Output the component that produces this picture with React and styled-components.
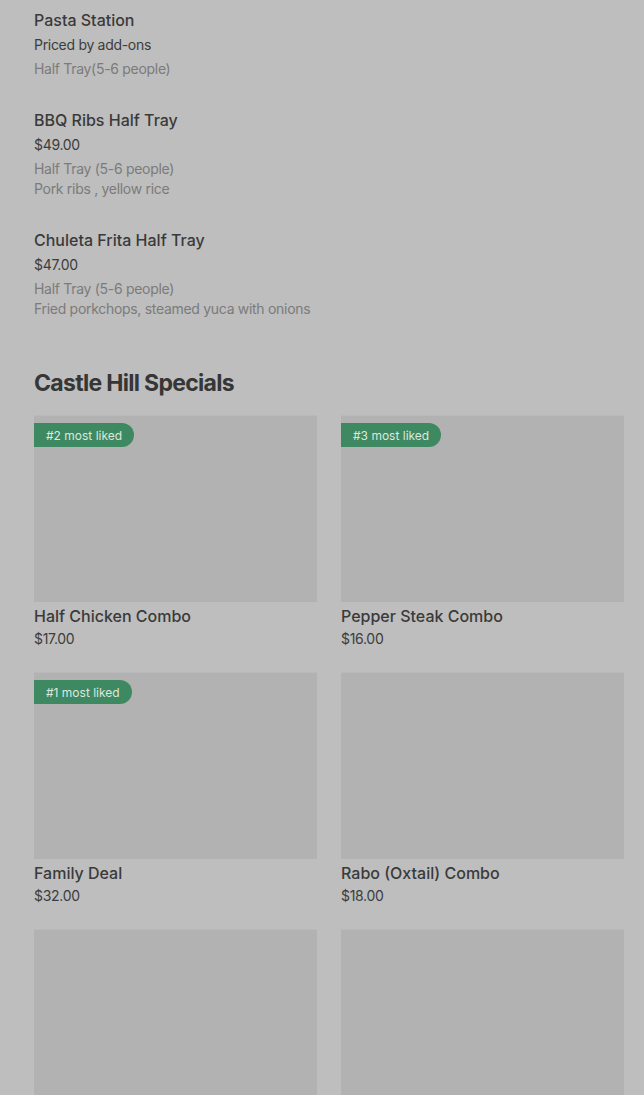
import styled, { createGlobalStyle } from 'styled-components';

const GlobalStyle = createGlobalStyle`
  html, body {
    margin: 0;
    padding: 0;
    background: #bebebe;
  }
  body {
    font-family: Inter, "Noto Sans", "Liberation Sans", sans-serif;
    color: #3a3a3a;
  }
`;

const trays = [
  { title: 'Pasta Station', price: 'Priced by add-ons', lines: ['Half Tray(5-6 people)'] },
  { title: 'BBQ Ribs Half Tray', price: '$49.00', lines: ['Half Tray (5-6 people)', 'Pork ribs , yellow rice'] },
  {
    title: 'Chuleta Frita Half Tray',
    price: '$47.00',
    lines: ['Half Tray (5-6 people)', 'Fried porkchops, steamed yuca with onions'],
  },
];

const specials = [
  { title: 'Half Chicken Combo', price: '$17.00', badge: '#2 most liked' },
  { title: 'Pepper Steak Combo', price: '$16.00', badge: '#3 most liked' },
  { title: 'Family Deal', price: '$32.00', badge: '#1 most liked' },
  { title: 'Rabo (Oxtail) Combo', price: '$18.00' },
  { title: '', price: '' },
  { title: '', price: '' },
];

export default function App() {
  return (
    <Page>
      <GlobalStyle />
      <List>
        {trays.map((t) => (
          <Item key={t.title}>
            <ItemTitle>{t.title}</ItemTitle>
            <ItemPrice>{t.price}</ItemPrice>
            <ItemDesc>
              {t.lines.map((l) => (
                <div key={l}>{l}</div>
              ))}
            </ItemDesc>
          </Item>
        ))}
      </List>

      <SectionTitle>Castle Hill Specials</SectionTitle>
      <Grid>
        {specials.map((s, i) => (
          <Card key={i}>
            <Thumb>{s.badge && <Badge>{s.badge}</Badge>}</Thumb>
            {s.title && <CardTitle>{s.title}</CardTitle>}
            {s.price && <CardPrice>{s.price}</CardPrice>}
          </Card>
        ))}
      </Grid>
    </Page>
  );
}

const Page = styled.main`
  padding: 8px 20px 0 34px;
  height: 1095px;
  overflow: hidden;
  box-sizing: border-box;
`;

const List = styled.div`
  display: flex;
  flex-direction: column;
  gap: 29px;
`;

const Item = styled.div`
  display: flex;
  flex-direction: column;
`;

const ItemTitle = styled.div`
  font-size: 16px;
  line-height: 24px;
  font-weight: 500;
  color: #3a3a3a;
`;

const ItemPrice = styled.div`
  margin-top: 3px;
  font-size: 14px;
  line-height: 20px;
  letter-spacing: -0.3px;
  color: #3c3c3c;
`;

const ItemDesc = styled.div`
  margin-top: 4px;
  font-size: 14px;
  line-height: 20px;
  letter-spacing: -0.3px;
  color: #7b7b7b;
`;

const SectionTitle = styled.h2`
  margin: 50px 0 18px;
  font-size: 23px;
  line-height: 28px;
  font-weight: 700;
  letter-spacing: -0.7px;
  color: #363636;
`;

const Grid = styled.div`
  display: grid;
  grid-template-columns: 283px 283px;
  column-gap: 24px;
  row-gap: 23px;
`;

const Card = styled.div`
  display: flex;
  flex-direction: column;
`;

const Thumb = styled.div`
  position: relative;
  height: 187px;
  background: #b2b2b2;
  border-top: 1px solid #b9b9b9;
  box-sizing: border-box;
`;

const Badge = styled.span`
  position: absolute;
  top: 7px;
  left: 0;
  height: 24px;
  padding: 0 12px;
  display: flex;
  align-items: center;
  border-radius: 0 12px 12px 0;
  background: #3f8962;
  color: #dbe8df;
  font-size: 12px;
  white-space: nowrap;
`;

const CardTitle = styled.div`
  margin-top: 2px;
  font-size: 16px;
  line-height: 24px;
  font-weight: 500;
  color: #3a3a3a;
`;

const CardPrice = styled.div`
  margin-top: 1px;
  font-size: 14px;
  line-height: 20px;
  letter-spacing: -0.3px;
  color: #3c3c3c;
`;
